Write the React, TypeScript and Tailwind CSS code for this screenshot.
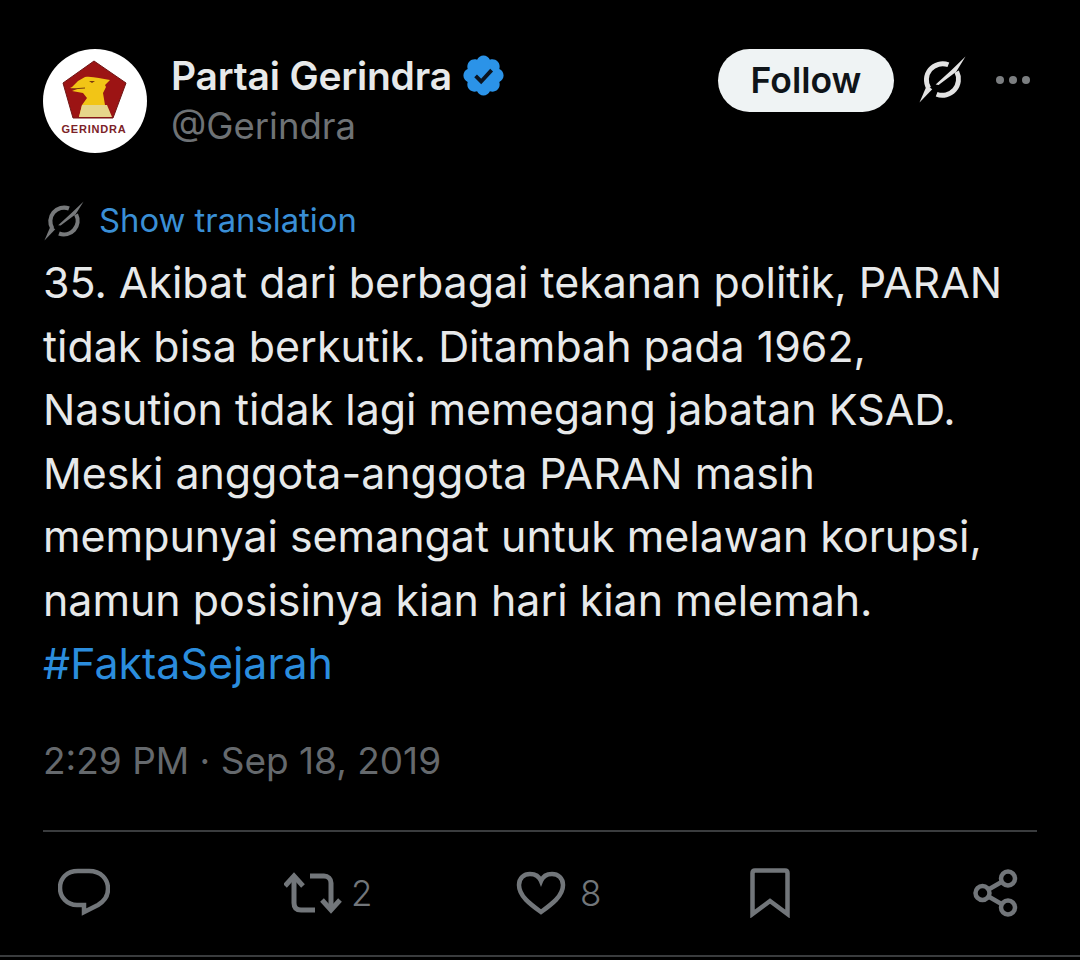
import React from 'react';

const font = { fontFamily: 'Inter, "Noto Sans", sans-serif' };

const TranslateIcon = ({ className }: { className: string }) => (
  <svg viewBox="0 0 48 48" className={className}>
    <path d="M30 9A16.500 16.500 0 0 0 10 33" fill="none" stroke="currentColor" strokeWidth="5" />
    <path d="M18 39A16.500 16.500 0 0 0 38.500 16" fill="none" stroke="currentColor" strokeWidth="5" />
    <path d="M47.500.5 38 16 20 29.500l-3-.5L33 14.500Z" fill="currentColor" />
    <path d="M.5 47.500 8 30l5.500 4Z" fill="currentColor" />
  </svg>
);

const Logo = () => (
  <div className="w-[104px] h-[104px] rounded-full bg-white shrink-0 overflow-hidden">
    <svg viewBox="0 0 104 104" className="w-full h-full">
      <path d="M51 12 83 34 70 69H30L20 34Z" fill="#9c1414" stroke="#6e1616" strokeWidth="1" />
      <path d="M29 38 35 32 42 28c8-1 16 2 25 3l-5 5 1 2-3 6 2 12 5 12H36l3-12 5-7-4-5-11-2 5-2-7-1Z" fill="#f2c516" />
      <path d="M36 68l3-12h25l5 12Z" fill="#e6d68a" />
      <path d="M29 40l13-1" fill="none" stroke="#7a3a10" strokeWidth="1" />
      <path d="M46 32l6 0-3 2Z" fill="#7a3a10" />
      <text x="51" y="84" textAnchor="middle" fontSize="11" fontWeight="800" fill="#7c2227" letterSpacing="0.800" style={{ fontFamily: '"Liberation Sans", sans-serif' }}>GERINDRA</text>
    </svg>
  </div>
);

const Verified = () => (
  <svg viewBox="0 0 22 22" className="w-[47px] h-[47px] shrink-0">
    <path fill="#2b93e8" d="M20.400 11c0-1.300-.8-2.500-2-3 .4-1.300.1-2.700-.8-3.600-.9-.9-2.300-1.200-3.600-.8-.5-1.200-1.700-2-3-2s-2.500.8-3 2c-1.300-.4-2.700-.1-3.600.8-.9.9-1.200 2.300-.8 3.600-1.200.5-2 1.700-2 3s.8 2.500 2 3c-.4 1.300-.1 2.700.8 3.600.9.900 2.300 1.200 3.600.8.500 1.200 1.700 2 3 2s2.500-.8 3-2c1.300.4 2.700.1 3.600-.8.9-.9 1.200-2.300.8-3.600 1.200-.5 2-1.700 2-3Z" />
    <path fill="none" stroke="#0b1420" strokeWidth="1.800" d="M7.300 11.200l2.600 2.600 4.900-5.300" />
  </svg>
);

const lines = [
  '35. Akibat dari berbagai tekanan politik, PARAN',
  'tidak bisa berkutik. Ditambah pada 1962,',
  'Nasution tidak lagi memegang jabatan KSAD.',
  'Meski anggota-anggota PARAN masih',
  'mempunyai semangat untuk melawan korupsi,',
  'namun posisinya kian hari kian melemah.',
];

export default function App() {
  return (
    <div style={font} className="w-[1080px] h-[960px] bg-black overflow-hidden flex flex-col">
      <div className="flex items-start pl-[43px] pr-[50px] pt-[49px]">
        <Logo />
        <div className="ml-[24px] flex-1">
          <div className="flex items-center h-[52px]">
            <span className="text-[39px] font-semibold text-[#e7e9ea] leading-none tracking-[-0.2px]">Partai Gerindra</span>
            <span className="ml-[8px]"><Verified /></span>
          </div>
          <div className="text-[36.500px] text-[#6e7275] leading-none mt-[7px]">@Gerindra</div>
        </div>
        <button className="w-[176px] h-[63px] rounded-full bg-[#eff3f4] text-[#0f1419] text-[35.500px] font-semibold">Follow</button>
        <div className="ml-[25px] mt-[7px] text-[#e3e3e3]"><TranslateIcon className="w-[47px] h-[47px]" /></div>
        <div className="ml-[30px] mt-[27px] flex gap-[5px]">
          <div className="w-[8px] h-[8px] rounded-full bg-[#7b7e80]" />
          <div className="w-[8px] h-[8px] rounded-full bg-[#7b7e80]" />
          <div className="w-[8px] h-[8px] rounded-full bg-[#7b7e80]" />
        </div>
      </div>

      <div className="flex items-center pl-[44px] mt-[43px] h-[50px]">
        <TranslateIcon className="w-[40px] h-[40px] text-[#77797b]" />
        <span className="ml-[15px] text-[32.800px] text-[#3a8fd6]">Show translation</span>
      </div>

      <div className="pl-[43px] mt-[5px] text-[42.900px] leading-[63.500px] text-[#e7e9ea] whitespace-nowrap">
        {lines.map((l) => <div key={l}>{l}</div>)}
        <div className="text-[#2b8ddd]">#FaktaSejarah</div>
      </div>

      <div className="pl-[43px] mt-[40px] text-[37px] leading-[50px] text-[#65696d]">2:29 PM · Sep 18, 2019</div>

      <div className="mx-[43px] mt-[44px] h-[2px] bg-[#3a3c3e]" />

      <div className="flex items-center pl-[58px] h-[123px] text-[#72767a]">
        <div className="w-[226px]">
          <svg viewBox="0 0 52 50" className="w-[52px] h-[50px]" fill="none" stroke="currentColor" strokeWidth="4.500">
            <path d="M20 3h11c12 0 19 8 19 18 0 8-5 13-10 16l-14 7v-7h-7C9 37 2 29 2 20 2 10 9 3 20 3Z" />
          </svg>
        </div>
        <div className="flex items-center w-[232px]">
          <svg viewBox="0 0 58 42" className="w-[58px] h-[42px] shrink-0" fill="none" stroke="currentColor" strokeWidth="5">
            <path d="M10 4v27c0 5 3 7 7 7h14" />
            <path d="M1 14 10 4l9 10" />
            <path d="M26 4h14c4 0 7 3 7 7v27" />
            <path d="M38 28l9 10 9-10" />
          </svg>
          <span className="ml-[9px] text-[35px] leading-none font-light">2</span>
        </div>
        <div className="flex items-center w-[234px]">
          <svg viewBox="0 0 50 44" className="w-[50px] h-[44px] shrink-0" fill="none" stroke="currentColor" strokeWidth="4.500">
            <path d="M25 41C14 33 3 25 3 14 3 7 8 3 14 3c5 0 9 2 11 7 2-5 6-7 11-7 6 0 11 4 11 11 0 11-11 19-22 27Z" />
          </svg>
          <span className="ml-[14px] text-[35px] leading-none font-light">8</span>
        </div>
        <div className="w-[223px]">
          <svg viewBox="0 0 40 50" className="w-[40px] h-[50px]" fill="none" stroke="currentColor" strokeWidth="4.500">
            <path d="M2.500 46V5c0-1.500 1-2.500 2.500-2.500h30c1.500 0 2.500 1 2.500 2.500v41L20 33Z" />
          </svg>
        </div>
        <svg viewBox="0 0 46 48" className="w-[46px] h-[48px] shrink-0" fill="none" stroke="currentColor" strokeWidth="4.500">
          <circle cx="35" cy="9.500" r="7" />
          <circle cx="35" cy="38.500" r="7" />
          <circle cx="9.500" cy="24" r="7" />
          <path d="M15.500 20.500l13-7.500M15.500 27.500l13 7.500" />
        </svg>
      </div>

      <div className="h-[2px] bg-[#3a3c3e]" />
    </div>
  );
}
